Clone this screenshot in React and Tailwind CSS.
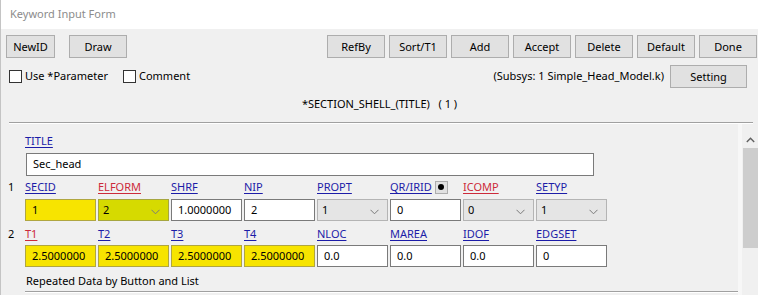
import React from "react";

const F = { fontFamily: '"Noto Sans", "Open Sans", sans-serif' };

function Btn({ children, className = "" }) {
  return (
    <div
      className={
        "h-[23px] flex items-center justify-center bg-[#e1e1e1] border border-[#adadad] text-[11px] text-black leading-none " +
        className
      }
    >
      {children}
    </div>
  );
}

function Chevron() {
  return (
    <svg width="9" height="6" viewBox="0 0 9 6" className="absolute right-[8px] top-[9px]">
      <path d="M0.5 0.8 L4.5 4.8 L8.5 0.8" fill="none" stroke="#7a7a7a" strokeWidth="1" />
    </svg>
  );
}

function Field({ value, kind = "input", hl = false }) {
  if (kind === "select") {
    const cls = hl
      ? "bg-[#d6da00] border-[#a6a640]"
      : "bg-[#e5e5e5] border-[#b4b4b4]";
    return (
      <div className={"relative h-[22px] border flex items-center pl-[4px] text-[11px] text-black " + cls}>
        {value}
        <Chevron />
      </div>
    );
  }
  const cls = hl ? "bg-[#f7e400] border-[#b0a640]" : "bg-white border-[#7a7a7a]";
  return (
    <div className={"h-[22px] border flex items-center pl-[6px] text-[11px] text-black " + cls}>
      {value}
    </div>
  );
}

function Label({ text, red = false, dot = false }) {
  return (
    <div className="h-[16px] flex items-center gap-[3px] text-[11px]">
      <span
        className={
          "underline underline-offset-2 " +
          (red ? "text-[#cc2a3a] decoration-[#cc2a3a]" : "text-[#1c1ca8] decoration-[#1c1ca8]")
        }
      >
        {text}
      </span>
      {dot && (
        <span className="w-[13px] h-[13px] bg-[#e1e1e1] border border-[#adadad] flex items-center justify-center">
          <span className="w-[6px] h-[6px] rounded-full bg-black" />
        </span>
      )}
    </div>
  );
}

const row1 = [
  { l: "SECID", v: "1", hl: true },
  { l: "ELFORM", v: "2", red: true, kind: "select", hl: true },
  { l: "SHRF", v: "1.0000000" },
  { l: "NIP", v: "2" },
  { l: "PROPT", v: "1", kind: "select" },
  { l: "QR/IRID", v: "0", dot: true },
  { l: "ICOMP", v: "0", red: true, kind: "select" },
  { l: "SETYP", v: "1", kind: "select" },
];

const row2 = [
  { l: "T1", v: "2.5000000", red: true, hl: true },
  { l: "T2", v: "2.5000000", hl: true },
  { l: "T3", v: "2.5000000", hl: true },
  { l: "T4", v: "2.5000000", hl: true },
  { l: "NLOC", v: "0.0" },
  { l: "MAREA", v: "0.0" },
  { l: "IDOF", v: "0.0" },
  { l: "EDGSET", v: "0" },
];

function CardRow({ num, items, labelMt, inputMt }) {
  return (
    <div className="flex flex-col">
      <div className={"flex " + labelMt}>
        <div className="w-[24px] pl-[7px] h-[16px] flex items-center text-[11px] text-black">{num}</div>
        <div className="grid grid-cols-[repeat(8,71px)] gap-x-[2px]">
          {items.map((it) => (
            <Label key={it.l} text={it.l} red={it.red} dot={it.dot} />
          ))}
        </div>
      </div>
      <div className={"flex " + inputMt}>
        <div className="w-[24px]" />
        <div className="grid grid-cols-[repeat(8,71px)] gap-x-[2px]">
          {items.map((it) => (
            <Field key={it.l} value={it.v} kind={it.kind} hl={it.hl} />
          ))}
        </div>
      </div>
    </div>
  );
}

export default function App() {
  return (
    <div style={F} className="w-[758px] h-[295px] overflow-hidden bg-[#f0f0f0] border-l border-[#c4c4c4] flex flex-col">
      <div className="h-[29px] bg-white flex items-center pl-[9px] text-[11px] text-[#8c8c8c] shrink-0">
        Keyword Input Form
      </div>
      <div className="flex items-center mt-[6px] pl-[5px] pr-[1px]">
        <Btn className="w-[49px]">NewID</Btn>
        <Btn className="w-[58px] ml-[14px]">Draw</Btn>
        <div className="ml-auto flex gap-[4px]">
          {["RefBy", "Sort/T1", "Add", "Accept", "Delete", "Default", "Done"].map((b) => (
            <Btn key={b} className="w-[58px]">{b}</Btn>
          ))}
        </div>
      </div>
      <div className="flex items-center mt-[7px] h-[23px] pl-[8px] pr-[11px] text-[11px] text-black">
        <div className="w-[13px] h-[13px] border border-[#333] bg-white" />
        <span className="ml-[3px]">Use *Parameter</span>
        <div className="w-[13px] h-[13px] border border-[#333] bg-white ml-[15px]" />
        <span className="ml-[3px]">Comment</span>
        <span className="ml-auto">(Subsys: 1 Simple_Head_Model.k)</span>
        <Btn className="w-[77px] ml-[6px]">Setting</Btn>
      </div>
      <div className="h-[16px] mt-[8px] flex items-center justify-center text-[11px] text-black whitespace-pre">
        {"*SECTION_SHELL_(TITLE)   ( 1 )"}
      </div>
      <div className="mt-[10px] ml-[8px] mr-[5px] h-[2px] border-t border-[#a0a0a0] border-b border-b-white" />
      <div className="flex flex-1 min-h-0">
        <div className="w-[737px] flex flex-col pt-[9px]">
          <div className="pl-[24px]">
            <Label text="TITLE" />
          </div>
          <div className="ml-[25px] mt-[4px] w-[568px] h-[23px] border border-[#7a7a7a] bg-white flex items-center pl-[6px] text-[11px] text-black">
            Sec_head
          </div>
          <CardRow num="1" items={row1} labelMt="mt-[3px]" inputMt="mt-[4px]" />
          <CardRow num="2" items={row2} labelMt="mt-[5px]" inputMt="mt-[3px]" />
          <div className="pl-[25px] mt-[6px] h-[16px] flex items-center text-[11px] text-black">
            Repeated Data by Button and List
          </div>
          <div className="ml-[24px] mt-[2px] h-[2px] border-t border-[#a0a0a0] border-b border-b-white" />
        </div>
        <div className="w-[4px] bg-[#f7f7f7]" />
        <div className="flex-1 flex flex-col items-center bg-[#f0f0f0]">
          <svg width="9" height="6" viewBox="0 0 9 6" className="mt-[13px]">
            <path d="M0.8 5 L4.5 1.3 L8.2 5" fill="none" stroke="#606060" strokeWidth="1.4" />
          </svg>
          <div className="mt-[5px] w-[15px] h-[100px] bg-[#cdcdcd]" />
        </div>
      </div>
    </div>
  );
}
